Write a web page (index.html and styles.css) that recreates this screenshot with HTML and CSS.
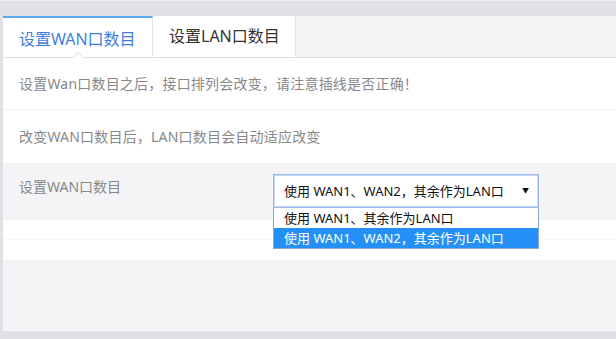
FILE: index.html
```html
<!DOCTYPE html>
<html lang="zh-CN">
<head>
<meta charset="utf-8">
<title>设置WAN口数目</title>
<link rel="stylesheet" href="styles.css">
</head>
<body>
<div class="page">
  <div class="tabs">
    <div class="tab active">设置WAN口数目<span class="caret"></span></div>
    <div class="tab">设置LAN口数目</div>
  </div>
  <div class="row">设置Wan口数目之后，接口排列会改变，请注意插线是否正确！</div>
  <div class="row">改变WAN口数目后，LAN口数目会自动适应改变</div>
  <div class="row form-row">
    <div class="label">设置WAN口数目</div>
    <div class="select-wrap">
      <div class="select">
        <span>使用 WAN1、WAN2，其余作为LAN口</span>
        <span class="arrow">▼</span>
      </div>
      <ul class="options">
        <li>使用 WAN1、其余作为LAN口</li>
        <li class="selected">使用 WAN1、WAN2，其余作为LAN口</li>
      </ul>
    </div>
  </div>
  <div class="row blank"></div>
  <div class="row blank"></div>
</div>
</body>
</html>
```
FILE: styles.css
```css
html, body {
  margin: 0;
  padding: 0;
}
body {
  background: #dfe1e5;
  width: 616px;
  height: 339px;
  overflow: hidden;
  font-family: "Noto Sans", "Noto Sans CJK SC", sans-serif;
  padding-top: 16px;
  box-sizing: border-box;
  border-top: 1px solid #eceef1;
}
.page {
  margin-left: 3px;
  height: 315px;
  background: #f4f4f6;
  margin-top: -1px;
}
.tabs {
  display: flex;
  height: 42px;
  box-sizing: border-box;
  border-bottom: 1px solid #dcdde2;
  background: #f3f3f5;
}
.tab {
  position: relative;
  background: #fff;
  box-sizing: border-box;
  height: 41px;
  font-size: 16px;
  color: #333;
  display: flex;
  align-items: center;
  border-right: 1px solid #e3e4e8;
  line-height: 20px;
}
.tab.active {
  width: 150px;
  padding: 2px 0 0 16px;
  border-top: 2px solid #5aa9ef;
  color: #3f7fe0;
}
.tab + .tab {
  width: 143px;
  padding-left: 16px;
  padding-bottom: 2px;
}
.caret {
  position: absolute;
  left: 69px;
  bottom: -1px;
  width: 0;
  height: 0;
  border-left: 6px solid transparent;
  border-right: 6px solid transparent;
  border-bottom: 6px solid #dcdde2;
}
.caret::after {
  content: "";
  position: absolute;
  left: -5px;
  top: 1px;
  border-left: 5px solid transparent;
  border-right: 5px solid transparent;
  border-bottom: 5px solid #fff;
}
.row {
  background: #fff;
  height: 52px;
  box-sizing: border-box;
  border-bottom: 1px solid #f0f0f2;
  padding-left: 16px;
  padding-top: 1px;
  display: flex;
  align-items: center;
  font-size: 14px;
  color: #888;
  line-height: 18px;
  letter-spacing: 0.2px;
}
.row + .row {
  height: 53px;
  border-bottom: none;
}
.row.form-row {
  background: #f4f4f6;
  height: 57px;
  align-items: flex-start;
  padding-top: 15px;
  letter-spacing: 0;
}
.label {
  width: 254px;
}
.select-wrap {
  position: relative;
  margin-top: -4px;
}
.select {
  width: 266px;
  height: 34px;
  box-sizing: border-box;
  border: 1px solid #9cb9ee;
  box-shadow: inset 0 0 0 1px #c5d6f5;
  background: #fff;
  display: flex;
  align-items: center;
  justify-content: space-between;
  padding: 0 8px 0 10px;
  font-size: 13px;
  color: #111;
}
.arrow {
  font-size: 7px;
  color: #111;
  padding-right: 1px;
}
.options {
  position: absolute;
  left: 0;
  top: 34px;
  width: 266px;
  box-sizing: border-box;
  margin: 0;
  padding: 0;
  list-style: none;
  border: 1px solid #8da6cf;
  border-top: none;
  background: #fff;
  z-index: 2;
}
.options li {
  height: 20px;
  line-height: 20px;
  padding-left: 10px;
  font-size: 13px;
  color: #111;
}
.options li.selected {
  background: #2490f6;
  color: #fff;
}
.row.blank {
  height: 20px;
  padding-top: 0;
  border-bottom: 1px solid #f6f6f8;
}
.row.blank + .row.blank {
  height: 20px;
  border-bottom: none;
}
```
